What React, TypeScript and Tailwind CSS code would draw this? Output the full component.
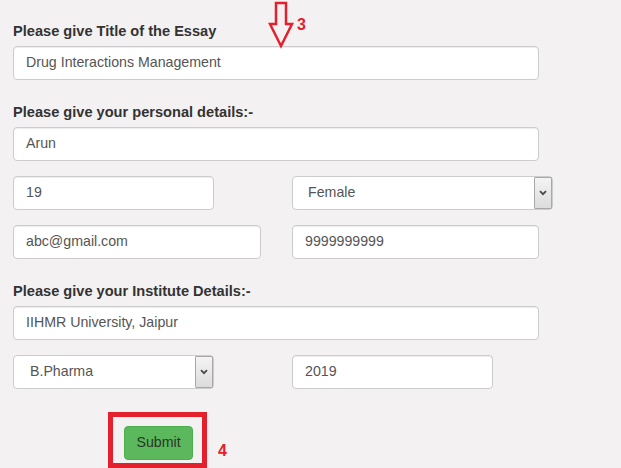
import React from "react";

const font = { fontFamily: '"Liberation Sans", Arial, sans-serif' };

function Input({ value, w }: { value: string; w: string }) {
  return (
    <div
      className={`${w} h-[34px] shrink-0 rounded-[4px] border border-[#cccccc] bg-white px-[12px] flex items-center text-[14.2px] text-[#555555] shadow-[inset_0_1px_1px_rgba(0,0,0,0.075)]`}
    >
      {value}
    </div>
  );
}

function Select({ value, w, pl }: { value: string; w: string; pl: string }) {
  return (
    <div
      className={`${w} h-[34px] shrink-0 rounded-[4px] border border-[#cccccc] bg-white flex items-stretch text-[14.2px] text-[#555555]`}
    >
      <div className={`flex-1 flex items-center ${pl}`}>{value}</div>
      <div className="w-[18px] border border-[#a8a8a8] rounded-[1px] bg-gradient-to-b from-[#f4f4f4] to-[#dcdcdc] flex items-center justify-center">
        <svg width="8" height="6" viewBox="0 0 8 6">
          <path d="M1 1.2 L4 4.2 L7 1.2" fill="none" stroke="#4a4a4a" strokeWidth="1.8" />
        </svg>
      </div>
    </div>
  );
}

function Label({ children }: { children: React.ReactNode }) {
  return (
    <div className="text-[14.6px] leading-[20px] font-bold text-[#333333] mb-[5px]">{children}</div>
  );
}

export default function App() {
  return (
    <div
      className="relative w-[621px] h-[468px] overflow-hidden bg-[#f3f1f2] pl-[13px] pt-[21px]"
      style={font}
    >
      <Label>Please give Title of the Essay</Label>
      <Input value="Drug Interactions Management" w="w-[526px]" />

      <div className="mt-[22px]">
        <Label>Please give your personal details:-</Label>
      </div>
      <Input value="Arun" w="w-[526px]" />

      <div className="mt-[15px] flex">
        <div className="w-[279px] shrink-0">
          <Input value="19" w="w-[201px]" />
        </div>
        <Select value="Female" w="w-[261px]" pl="pl-[15px]" />
      </div>

      <div className="mt-[15px] flex">
        <div className="w-[279px] shrink-0">
          <Input value="abc@gmail.com" w="w-[248px]" />
        </div>
        <Input value="9999999999" w="w-[247px]" />
      </div>

      <div className="mt-[22px]">
        <Label>Please give your Institute Details:-</Label>
      </div>
      <Input value="IIHMR University, Jaipur" w="w-[526px]" />

      <div className="mt-[15px] flex">
        <div className="w-[279px] shrink-0">
          <Select value="B.Pharma" w="w-[201px]" pl="pl-[16px]" />
        </div>
        <Input value="2019" w="w-[201px]" />
      </div>

      <div className="relative mt-[23px] ml-[95px] w-[99px] h-[56px] border-[5px] border-[#e3202c] pl-[11px] pt-[9px]">
        <div className="w-[69px] h-[34px] rounded-[4px] border border-[#4cae4c] bg-[#5cb85c] flex items-center justify-center text-[14.2px] text-[#2a352a]">
          Submit
        </div>
        <div className="absolute left-[105px] top-[26px] text-[16px] leading-[16px] font-bold text-[#e3202c]">
          4
        </div>
      </div>

      <svg
        className="absolute left-[268px] top-[1px]"
        width="26"
        height="48"
        viewBox="0 0 26 48"
      >
        <path
          d="M8 2 H18 V23 H24 L13 45 L2 23 H8 Z"
          fill="none"
          stroke="#e3202c"
          strokeWidth="2.5"
          strokeLinejoin="miter"
        />
      </svg>
      <div className="absolute left-[297px] top-[17px] text-[16px] leading-[16px] font-bold text-[#e3202c]">
        3
      </div>
    </div>
  );
}
